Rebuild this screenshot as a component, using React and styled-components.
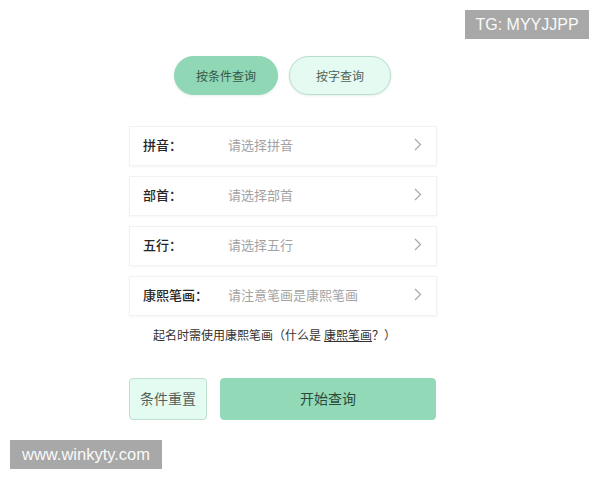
import React from 'react'
import styled, { createGlobalStyle } from 'styled-components'

const GlobalStyle = createGlobalStyle`
  body {
    margin: 0;
    background: #ffffff;
    font-family: "Noto Sans CJK SC", "Noto Sans", sans-serif;
  }
`

const Page = styled.div`
  position: relative;
  width: 600px;
  height: 480px;
  overflow: hidden;
  background: #fff;
`

const Column = styled.div`
  width: 308px;
  margin-left: 129px;
  padding-top: 56px;
  display: flex;
  flex-direction: column;
`

const Tabs = styled.div`
  display: flex;
  justify-content: center;
  gap: 11px;
  padding-right: 1px;
`

const Pill = styled.div`
  width: ${p => (p.active ? '104px' : '102px')};
  height: 39px;
  box-sizing: border-box;
  border-radius: 20px;
  display: flex;
  align-items: center;
  justify-content: center;
  line-height: 1;
  font-size: 12px;
  color: ${p => (p.active ? '#35584a' : '#4f6359')};
  background: ${p => (p.active ? '#8fd7b5' : '#e5fbf2')};
  border: 1px solid ${p => (p.active ? '#8fd7b5' : '#b9ddcc')};
  box-shadow: 0 1px 3px rgba(80, 140, 110, 0.15);
`

const List = styled.div`
  margin-top: 31px;
  display: flex;
  flex-direction: column;
  gap: 10px;
`

const Row = styled.div`
  height: 40px;
  box-sizing: border-box;
  display: flex;
  align-items: center;
  line-height: 1;
  padding: 0 14px 3px 13px;
  background: #fff;
  border: 1px solid #f2f2f2;
  box-shadow: 0 1px 3px rgba(0, 0, 0, 0.04);
`

const Label = styled.span`
  width: 85px;
  font-size: 13px;
  font-weight: 500;
  color: #262626;
`

const Placeholder = styled.span`
  flex: 1;
  font-size: 13px;
  color: #a3a3a3;
`

const Note = styled.div`
  margin-top: 10px;
  height: 18px;
  line-height: 18px;
  font-size: 12px;
  color: #333;
  padding-left: 24px;
`

const NoteLink = styled.span`
  text-decoration: underline;
  margin-left: 3px;
`

const Actions = styled.div`
  margin-top: 34px;
  display: flex;
  gap: 13px;
`

const Button = styled.div`
  height: 42px;
  box-sizing: border-box;
  border-radius: 4px;
  display: flex;
  align-items: center;
  justify-content: center;
  line-height: 1;
  padding-bottom: 3px;
  font-size: 14px;
  width: ${p => (p.primary ? '216px' : '78px')};
  color: ${p => (p.primary ? '#2c4a3b' : '#555f5a')};
  background: ${p => (p.primary ? '#92d9b8' : '#e4fbf1')};
  border: 1px solid ${p => (p.primary ? '#92d9b8' : '#bfdfd1')};
`

const Badge = styled.div`
  position: absolute;
  background: #a8a8a8;
  color: #fafafa;
  font-family: "Liberation Sans", Arial, sans-serif;
  font-size: 16px;
  display: flex;
  align-items: center;
  justify-content: center;
  ${p => p.top
    ? 'top: 10px; left: 465px; width: 124px; height: 29px;'
    : 'top: 440px; left: 10px; width: 152px; height: 29px; font-size: 16.5px;'}
`

const Chevron = () => (
  <svg width="8" height="13" viewBox="0 0 8 13">
    <path d="M1 1 L6.5 6.5 L1 12" fill="none" stroke="#a8a8a8" strokeWidth="1.2" />
  </svg>
)

const rows = [
  ['拼音：', '请选择拼音'],
  ['部首：', '请选择部首'],
  ['五行：', '请选择五行'],
  ['康熙笔画：', '请注意笔画是康熙笔画'],
]

export default function App() {
  return (
    <Page>
      <GlobalStyle />
      <Column>
        <Tabs>
          <Pill active>按条件查询</Pill>
          <Pill>按字查询</Pill>
        </Tabs>
        <List>
          {rows.map(([label, hint]) => (
            <Row key={label}>
              <Label>{label}</Label>
              <Placeholder>{hint}</Placeholder>
              <Chevron />
            </Row>
          ))}
        </List>
        <Note>
          起名时需使用康熙笔画（什么是<NoteLink>康熙笔画</NoteLink>？）
        </Note>
        <Actions>
          <Button>条件重置</Button>
          <Button primary>开始查询</Button>
        </Actions>
      </Column>
      <Badge top>TG: MYYJJPP</Badge>
      <Badge>www.winkyty.com</Badge>
    </Page>
  )
}
